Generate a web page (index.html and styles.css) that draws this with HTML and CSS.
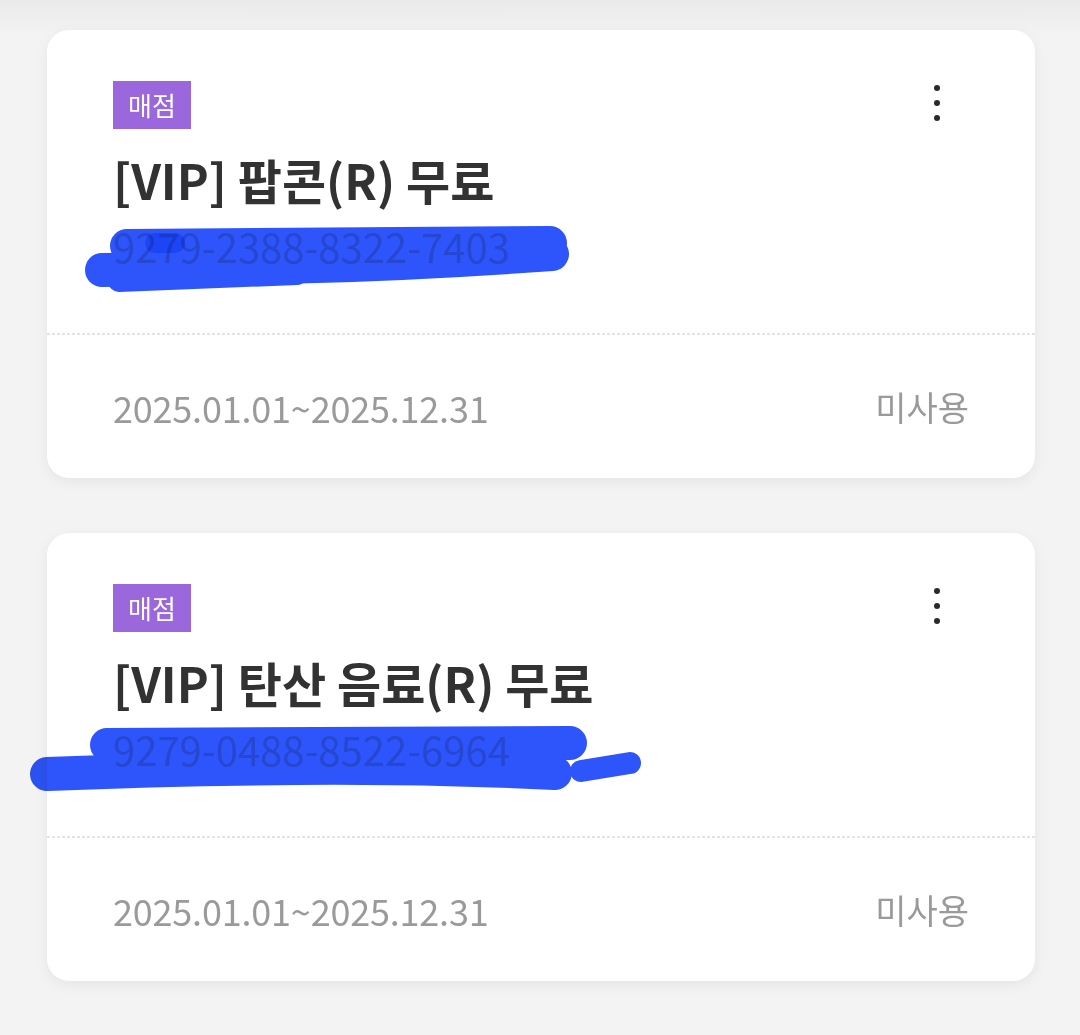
FILE: index.html
```html
<!doctype html>
<html>
<head>
<meta charset="utf-8"/>
<meta name="viewport" content="width=device-width,initial-scale=1.0"/>
<title>쿠폰함</title>
<link rel="stylesheet" href="styles.css">
</head>
<body>

<div class="coupon-list">

    <div class="coupon">
        <div class="coupon-top">
            <div class="coupon-info">
                <span class="badge">매점</span>
                <h2 class="coupon-title">[VIP] 팝콘(R) 무료</h2>
                <p class="coupon-code">9279-2388-8322-7403</p>
            </div>
            <div class="more"><i></i><i></i><i></i></div>
        </div>
        <div class="coupon-bottom">
            <span class="period">2025.01.01~2025.12.31</span>
            <span class="state">미사용</span>
        </div>
        <!--가림 표시-->
        <svg class="scribble" viewBox="0 0 988 448" width="988" height="448">
            <path d="M80 216 L503 213"/>
            <path d="M55 240 Q160 239 270 236 T505 224"/>
            <path class="thin" d="M72 251 L250 244"/>
            <path class="spot" d="M108 213 L128 213"/>
        </svg>
    </div>

    <div class="coupon">
        <div class="coupon-top">
            <div class="coupon-info">
                <span class="badge">매점</span>
                <h2 class="coupon-title">[VIP] 탄산 음료(R) 무료</h2>
                <p class="coupon-code">9279-0488-8522-6964</p>
            </div>
            <div class="more"><i></i><i></i><i></i></div>
        </div>
        <div class="coupon-bottom">
            <span class="period">2025.01.01~2025.12.31</span>
            <span class="state">미사용</span>
        </div>
        <svg class="scribble" viewBox="0 0 988 448" width="988" height="448">
            <path d="M60 212 L523 210"/>
            <path d="M0 241 Q120 236 250 235 T508 240"/>
            <path class="thin" d="M534 238 L583 230"/>
        </svg>
    </div>

</div>

</body>
</html>
```

FILE: styles.css
```css
*{margin:0;padding:0;box-sizing:border-box}
body{background:#f3f3f3 linear-gradient(#eaeaea,#f3f3f3 36px) no-repeat;font-family:"Noto Sans CJK KR","Noto Sans",sans-serif;color:#333}

.coupon-list{padding:30px 45px 0 47px}
.coupon{position:relative;background:#fff;border-radius:22px;margin-bottom:55px;box-shadow:0 4px 14px rgba(0,0,0,.06)}

.coupon-top{display:flex;justify-content:space-between;align-items:flex-start;padding:51px 82px 62px 66px}
.coupon-info{display:flex;flex-direction:column;align-items:flex-start}
.badge{display:block;height:48px;line-height:48px;padding:0 15px;background:#9a67dc;color:#fff;font-size:26px;font-weight:400}
.coupon-title{margin-top:20px;font-size:48px;line-height:60px;font-weight:700;color:#323232}
.coupon-code{margin-top:12px;font-size:40px;line-height:50px;color:#d4d4d4}

.more{display:flex;flex-direction:column;align-items:center;gap:9px;width:32px;margin-top:4px}
.more i{display:block;width:6px;height:6px;border-radius:50%;background:#2a2a2a}

.coupon-bottom{display:flex;justify-content:space-between;padding:54px 66px 51px;
    background:repeating-linear-gradient(90deg,#e3e3e3 0 3px,transparent 3px 5px) top left/100% 2px no-repeat}
.period,.state{font-size:36px;line-height:40px;color:#9a9a9a}
.period{letter-spacing:-0.2px}
.state{font-size:34px}

.scribble{position:absolute;left:0;top:0;overflow:visible;pointer-events:none;mix-blend-mode:multiply}
.scribble path{fill:none;stroke:#2d55fb;stroke-width:34;stroke-linecap:round;stroke-linejoin:round}
.scribble path.thin{stroke-width:22}
.scribble path.spot{stroke:#1c45f6;stroke-width:20}
```
